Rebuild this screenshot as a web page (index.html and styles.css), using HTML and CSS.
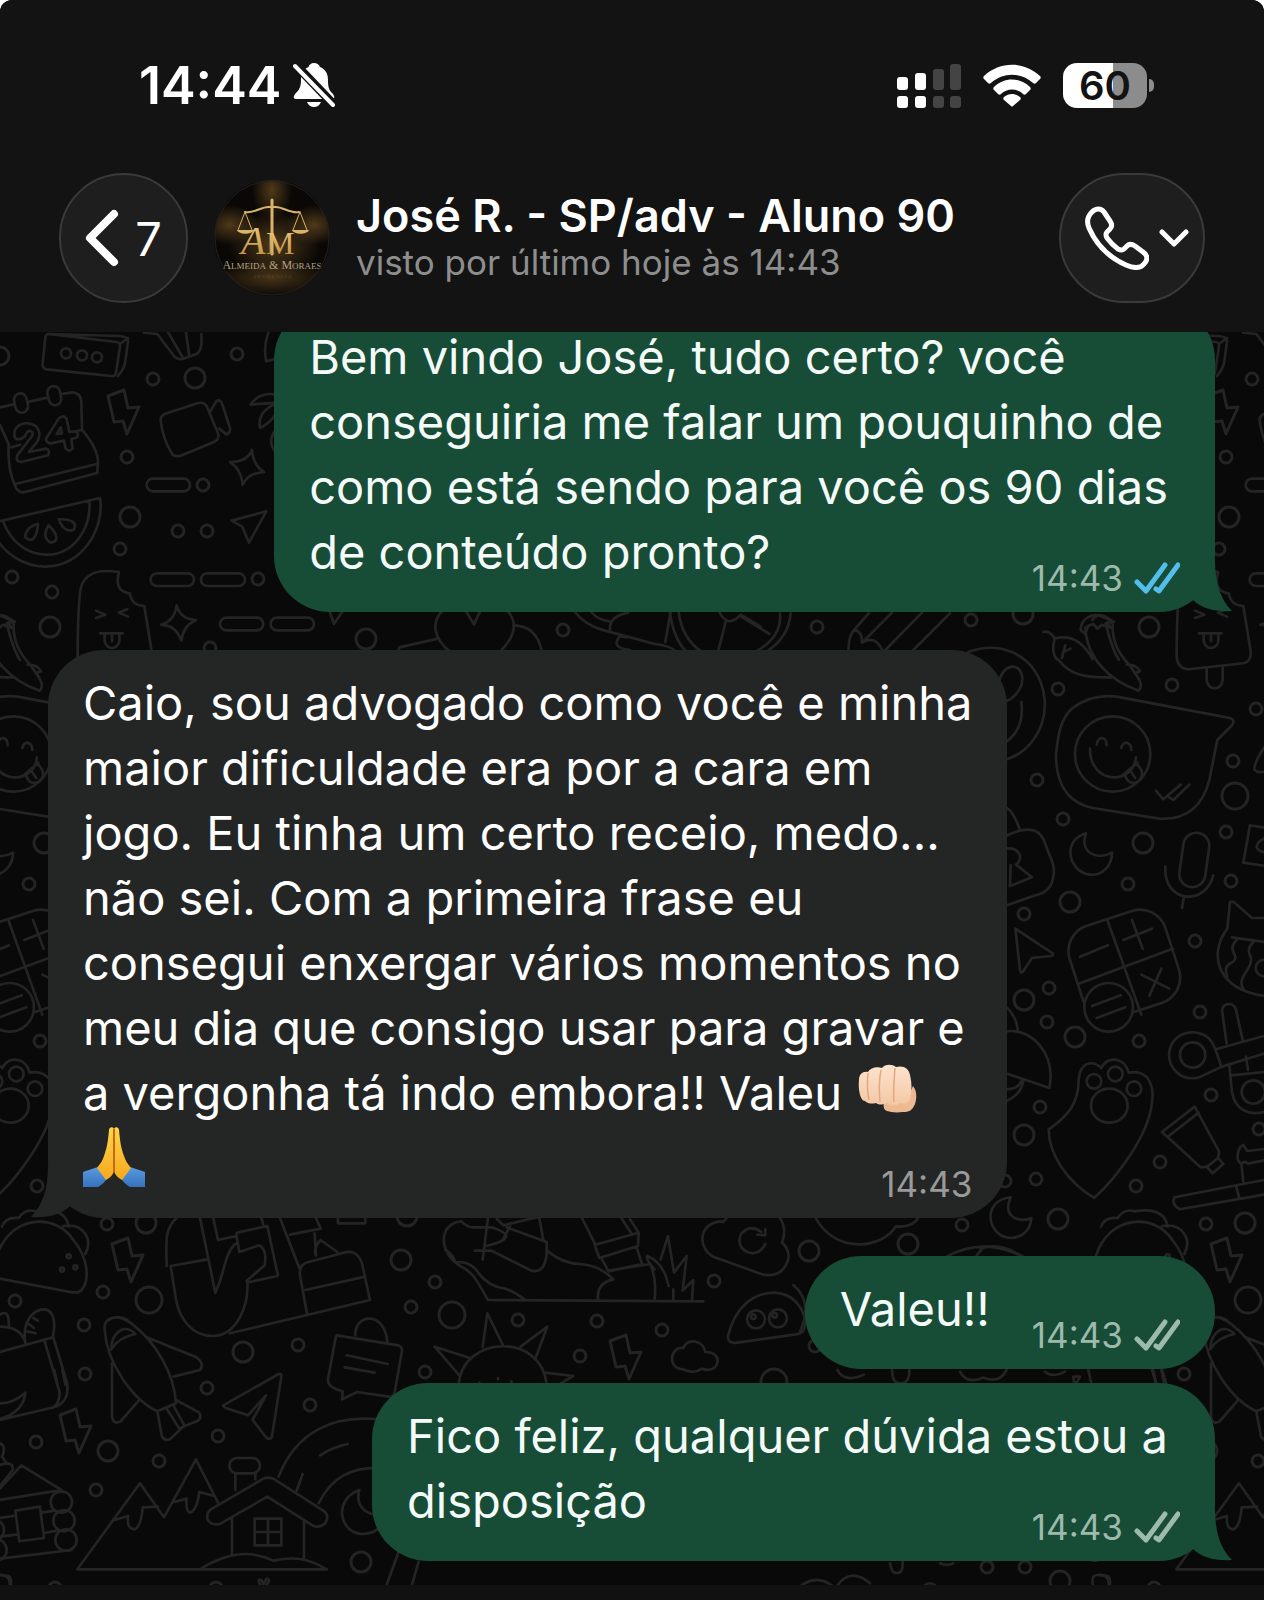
FILE: index.html
```html
<!DOCTYPE html>
<html lang="pt-BR">
<head>
    <meta charset="UTF-8">
    <meta name="viewport" content="width=device-width, initial-scale=1.0">
    <title>José R. - SP/adv - Aluno 90</title>
    <link rel="stylesheet" href="styles.css">
</head>
<body>
    <div class="phone">
        <header class="header">
            <div class="status-bar">
                <div class="clock">
                    <span>14:44</span>
                    <svg class="bell" width="42" height="46" viewBox="0 0 42 46" aria-hidden="true">
                        <path fill="#fff" d="M21 1c-3 0-5 2-5.500 4C10 7 8 12 8 18c0 7-2 10-5 13-3 3-3 6 0 6h36c3 0 3-3 0-6-3-3-4-6-4-13 0-7-3-11-8-13-.5-2-3-4-6-4zM14 40h14c-1 3-4 5-7 5s-6-2-7-5z"/>
                        <path stroke="#131313" stroke-width="9" d="M1 1l42 44"/>
                        <path stroke="#fff" stroke-width="4" stroke-linecap="round" d="M2 4l38 39"/>
                    </svg>
                </div>
                <div class="indicators">
                    <svg width="64" height="45" viewBox="0 0 64 45" aria-hidden="true">
                        <g fill="#fff">
                            <rect x="0" y="14" width="11" height="13" rx="3"/>
                            <rect x="18" y="10" width="11" height="17" rx="3"/>
                            <rect x="0" y="33" width="11" height="12" rx="3"/>
                            <rect x="18" y="33" width="11" height="12" rx="3"/>
                        </g>
                        <g fill="#444">
                            <rect x="36" y="6" width="11" height="21" rx="3"/>
                            <rect x="53" y="1" width="11" height="26" rx="3"/>
                            <rect x="36" y="33" width="11" height="12" rx="3"/>
                            <rect x="53" y="33" width="11" height="12" rx="3"/>
                        </g>
                    </svg>
                    <svg width="58" height="43" viewBox="0 0 58 43" fill="#fff" aria-hidden="true">
                        <path d="M1 12C17-3 41-3 57 12c1 1 1 2 0 3l-4 4c-1 1-2 1-3 0C38 8 20 8 8 19c-1 1-2 1-3 0l-4-4c-1-1-1-2 0-3z"/>
                        <path d="M11 23c10-10 26-10 36 0 1 1 1 2 0 3l-4 4c-1 1-2 1-3 0-6-6-16-6-22 0-1 1-2 1-3 0l-4-4c-1-1-1-2 0-3z"/>
                        <path d="M21 33c5-4 11-4 16 0 1 1 1 2 0 3l-7 6c-1 1-1 1-2 0l-7-6c-1-1-1-2 0-3z"/>
                    </svg>
                    <div class="battery"><span class="battery-level">60</span></div>
                </div>
            </div>

            <div class="nav">
                <button class="glass back" type="button" aria-label="Voltar, 7 conversas">
                    <svg width="34" height="58" viewBox="0 0 34 58" fill="none" aria-hidden="true">
                        <path stroke="#fff" stroke-width="8" stroke-linecap="round" stroke-linejoin="round" d="M29 5L5 29l24 24"/>
                    </svg>
                    <span>7</span>
                </button>
                <svg class="avatar" viewBox="0 0 117 117" role="img" aria-label="Almeida &amp; Moraes">
                    <defs>
                        <radialGradient id="glow">
                            <stop offset="0" stop-color="#6d4f22"/>
                            <stop offset="1" stop-color="#6d4f22" stop-opacity="0"/>
                        </radialGradient>
                        <linearGradient id="gold" x2="0" y2="1">
                            <stop offset="0" stop-color="#f0cf86"/>
                            <stop offset="1" stop-color="#bd8838"/>
                        </linearGradient>
                        <clipPath id="disc"><circle cx="58" cy="58" r="58"/></clipPath>
                    </defs>
                    <g clip-path="url(#disc)">
                        <rect width="117" height="117" fill="#0a0806"/>
                        <ellipse cx="58" cy="10" rx="20" ry="30" fill="url(#glow)" opacity=".7"/>
                        <ellipse cx="16" cy="45" rx="28" ry="20" fill="url(#glow)" opacity=".7"/>
                        <ellipse cx="100" cy="45" rx="28" ry="20" fill="url(#glow)" opacity=".7"/>
                        <ellipse cx="60" cy="65" rx="46" ry="34" fill="url(#glow)" opacity=".7"/>
                        <ellipse cx="58" cy="98" rx="60" ry="18" fill="url(#glow)" opacity=".6"/>
                        <g fill="none" stroke="#d9b36a" stroke-linecap="round">
                            <path stroke-width="3" d="M58 20v54"/>
                            <path stroke-width="2" d="M31 32c8 2 16-5 23-5h8c7 0 15 7 23 5"/>
                            <path stroke-width="1" d="M31 32l-7 18M31 32l7 18M86 32l-7 18M86 32l7 18"/>
                        </g>
                        <path fill="#d9b36a" d="M23 50h17c-2 5-15 5-17 0zM78 50h17c-2 5-15 5-17 0z"/>
                        <g fill="url(#gold)" font-family="Liberation Serif, serif">
                            <text x="27" y="74" font-size="40" font-style="italic">A</text>
                            <text x="52" y="74" font-size="32">M</text>
                        </g>
                        <text x="58" y="89" font-size="12" text-anchor="middle" fill="#b5a083" font-family="Liberation Serif, serif">A<tspan font-size="9">LMEIDA</tspan> &amp; M<tspan font-size="9">ORAES</tspan></text>
                        <text x="58" y="98" font-size="5" text-anchor="middle" fill="#5f4c31" font-family="Liberation Serif, serif">A D V O C A C I A</text>
                    </g>
                    <circle cx="58" cy="58" r="57" fill="none" stroke="#222"/>
                </svg>
                <div class="contact">
                    <h1 class="contact-name">José R. - SP/adv - Aluno 90</h1>
                    <p class="contact-seen">visto por último hoje às 14:43</p>
                </div>
                <button class="glass call" type="button" aria-label="Ligar">
                    <svg width="64" height="64" viewBox="0 0 64 64" fill="none" stroke="#fff" stroke-width="5" stroke-linejoin="round" aria-hidden="true">
                        <path d="M7 6c4-4 9-4 12 0l6 9c2 3 2 6 0 8l-3 3c-2 2-1 4 0 6 3 4 7 8 11 11 2 1 4 2 6 0l3-3c2-2 5-2 8 0l8 6c5 3 5 8 1 12-4 5-11 4-18 1C23 51 11 38 4 22 1 15 3 10 7 6z"/>
                    </svg>
                    <svg width="30" height="18" viewBox="0 0 30 18" fill="none" aria-hidden="true">
                        <path stroke="#fff" stroke-width="5" stroke-linecap="round" stroke-linejoin="round" d="M3 3l12 12L27 3"/>
                    </svg>
                </button>
            </div>
        </header>

        <main class="chat">
            <!-- Doodle wallpaper, repeats every 1099px -->
            <svg class="wallpaper" aria-hidden="true">
                <defs>
                    <path id="bolt" d="M1 6L17 0l4 18 11-1-12 27-4-13-9 1z"/>
                    <g id="doodles">
                        <!-- dots -->
                        <g stroke-width="3">
                            <circle cx="237" cy="354" r="6"/><circle cx="153" cy="379" r="6"/><circle cx="127" cy="457" r="6"/>
                            <circle cx="203" cy="485" r="6"/><circle cx="178" cy="531" r="6"/><circle cx="207" cy="531" r="6"/>
                            <circle cx="120" cy="549" r="6"/><circle cx="12" cy="577" r="6"/><circle cx="52" cy="592" r="6"/>
                            <circle cx="258" cy="579" r="6"/><circle cx="210" cy="648" r="6"/><circle cx="195" cy="378" r="10"/>
                            <circle cx="130" cy="517" r="10"/><circle cx="0" cy="356" r="9"/>
                            <circle cx="971" cy="620" r="6"/><circle cx="1058" cy="689" r="6"/><circle cx="1172" cy="685" r="6"/>
                            <circle cx="1256" cy="709" r="6"/><circle cx="1037" cy="780" r="6"/><circle cx="1233" cy="761" r="6"/>
                            <circle cx="1063" cy="819" r="6"/><circle cx="1226" cy="832" r="6"/><circle cx="1023" cy="614" r="10"/>
                            <circle cx="1149" cy="627" r="10"/><circle cx="1143" cy="843" r="10"/><circle cx="1235" cy="796" r="13"/>
                            <circle cx="1128" cy="884" r="6"/><circle cx="1024" cy="914" r="6"/><circle cx="1195" cy="941" r="6"/>
                            <circle cx="1231" cy="881" r="6"/><circle cx="1049" cy="988" r="6"/><circle cx="1047" cy="1022" r="6"/>
                            <circle cx="1200" cy="1012" r="6"/><circle cx="1139" cy="1041" r="6"/><circle cx="1211" cy="1095" r="6"/>
                            <circle cx="1040" cy="1107" r="6"/><circle cx="1005" cy="1181" r="6"/><circle cx="1036" cy="1179" r="6"/>
                            <circle cx="1160" cy="1162" r="6"/><circle cx="1136" cy="1186" r="6"/><circle cx="1259" cy="1129" r="6"/>
                            <circle cx="1070" cy="902" r="10"/><circle cx="1024" cy="1000" r="10"/><circle cx="1075" cy="1037" r="10"/>
                            <circle cx="1024" cy="1135" r="10"/><circle cx="1058" cy="1219" r="10"/>
                            <circle cx="107" cy="1224" r="6"/><circle cx="103" cy="1292" r="6"/><circle cx="15" cy="1301" r="6"/>
                            <circle cx="84" cy="1325" r="6"/><circle cx="85" cy="1374" r="6"/><circle cx="207" cy="1388" r="6"/>
                            <circle cx="298" cy="1345" r="6"/><circle cx="310" cy="1405" r="6"/><circle cx="218" cy="1436" r="6"/>
                            <circle cx="36" cy="1442" r="6"/><circle cx="159" cy="1461" r="6"/><circle cx="96" cy="1490" r="6"/>
                            <circle cx="411" cy="1307" r="6"/><circle cx="146" cy="1223" r="10"/><circle cx="243" cy="1352" r="10"/>
                            <circle cx="108" cy="1451" r="10"/><circle cx="401" cy="1260" r="10"/><circle cx="361" cy="1562" r="10"/>
                            <circle cx="407" cy="1216" r="10"/><circle cx="149" cy="1300" r="13"/>
                            <circle cx="435" cy="1282" r="6"/><circle cx="518" cy="1320" r="6"/><circle cx="597" cy="1321" r="6"/>
                            <circle cx="662" cy="1330" r="6"/><circle cx="714" cy="1281" r="6"/><circle cx="425" cy="1372" r="6"/>
                            <circle cx="580" cy="1356" r="6"/><circle cx="815" cy="1346" r="6"/><circle cx="809" cy="1251" r="10"/>
                            <circle cx="452" cy="1315" r="13"/><circle cx="774" cy="1382" r="13"/><circle cx="908" cy="1244" r="10"/>
                            <circle cx="962" cy="1225" r="6"/><circle cx="987" cy="1567" r="6"/><circle cx="1025" cy="1567" r="6"/>
                            <circle cx="1060" cy="1581" r="10"/><circle cx="366" cy="639" r="10"/><circle cx="563" cy="630" r="6"/>
                            <circle cx="817" cy="627" r="6"/><circle cx="55" cy="1588" r="6"/><circle cx="216" cy="1588" r="6"/>
                            <use href="#bolt" x="107" y="390"/><use href="#bolt" x="111" y="1238"/>
                            <use href="#bolt" x="59" y="1409"/><use href="#bolt" x="609" y="1335"/>
                        </g>
                        <!-- speaker, calendar, camera, melon, ice lolly -->
                        <g transform="translate(0 320) scale(.3333)">
                            <path d="M145 42L350 66q12 2 10 14l-12 78q-2 12-14 10L140 148q-14-2-12-16l8-80q2-10 12-10l210 6q28 2 26 16l-8 60q-2 20-22 44M360 72l24-18"/>
                            <circle cx="198" cy="100" r="15"/><circle cx="246" cy="106" r="15"/><circle cx="291" cy="112" r="15"/>
                            <path d="M0 262l40-9M88 245l54-12M186 222l30-5q26 0 28 28l2 84q48 58 48 96l-2 34-220 58q-22 2-28-24-22-44-18-120L0 315M34 382l26-8M220 336l26-6M46 492L290 432"/>
                            <rect x="44" y="220" width="38" height="58" rx="19" transform="rotate(-12 63 249)"/>
                            <rect x="144" y="198" width="38" height="58" rx="19" transform="rotate(-12 163 227)"/>
                            <path d="M44 350c-6-30 20-42 40-40 40 4 40 40 24 60l-22 26 52-10q14 4 6 20l-80 20q-20-2-12-20l44-58c8-14-10-22-18-6-6 16-30 22-34 8zM176 296l-38 60q0 12 14 14l40-8 4 22q10 14 22 2l-4-28 18-6q6-14-6-18l-18 2-8-40q-10-14-24 0zM170 342l12-20 4 18z"/>
                            <path d="M482 302q-2-12 12-20l98-32q20-6 28 8l34 82q6 18-12 26l-96 40q-24 8-32-8-26-44-32-96zM630 276l20-34q12-4 16 8l24 74q2 14-10 20l-22-18"/>
                            <path d="M752 254c16-28 50-36 76-30M752 254c30-4 50-2 76-6M828 250c-40 20-54 40-48 74 20-10 36-20 48-44M826 330c-14 20-18 40-4 60M432 38l40 4 50 66q12 14 28 8l40-14q18-10 14-60M505 38l44 76M558 38l10 70M805 38q-16 44-6 86l28-8"/>
                            <path d="M690 426c30 0 56-10 66-36 2 30 12 50 36 66-34 4-52 12-64 38-2-30-14-52-38-68zM484 914c26-8 42-26 46-58 8 30 26 42 58 44-26 12-40 30-44 62-10-28-24-44-60-48zM695 602l104-28-52 94-20-48z"/>
                            <rect x="440" y="476" width="130" height="38" rx="19"/><rect x="452" y="760" width="130" height="38" rx="19"/>
                            <rect x="603" y="760" width="132" height="38" rx="19"/><rect x="660" y="893" width="130" height="38" rx="19"/>
                            <rect x="812" y="893" width="130" height="38" rx="19"/>
                            <path d="M-10 606L300 534c14 90-50 204-164 206C70 740 10 700-20 640M10 606c24 60 70 98 130 98 80 0 134-76 128-160"/>
                            <path d="M114 612c-24 4-40 24-38 40 14 14 34 12 38-40zM146 616c-14 22-14 42 6 52 24-2 24-22-6-52zM176 598c10 26 26 38 44 32 14-20-4-34-44-32z"/>
                            <path d="M233 1010c0-80 0-130 8-200 10-50 50-64 116-54-10 40 0 60 32 64 6 28 20 38 44 38l22 136q2 32-22 36l-165 18q-32-2-35-38zM323 1045v36q4 24 24 24t24-24v-40M288 872l28 12-28 10M382 868l-26 10 28 12M300 940h68M314 942v22q6 20 22 20t22-20v-22M336 946v18"/>
                            <path d="M-20 900q20-30 60 4l-20 6q20 80 40 110"/>
                        </g>
                        <!-- strip between the first two messages -->
                        <g transform="translate(260 590) scale(.3333)">
                            <path d="M208 62l14 40 26-38M570 185c-50-40-58-90-20-125M720 185c50-50 54-90 20-125M616 60l26 44 18-40M416 180l2-8 116-26M760 106q70 0 86 80M945 66q30 40 90 56l150 40q50 6 64 24M994 66q20 24 54 28M1050 120q-4-40 54-52M1232 66l-16 90M1230 66q10 80 50 120M1256 66q10 80 70 120M1378 66q26 50 64 8l60 36M1398 92l-24 94M1110 180q-60-6-30-42l20 4"/>
                        </g>
                        <g transform="translate(740 320) scale(.3333)">
                            <path d="M4 890l84 52M120 880q6 70-68 112M152 880q-6 70-68 112M386 880l-42 48q-20 20-18 64M344 928q24 10 22 40 36-24 60 20M366 968l90-90M436 990l110-112M520 990l110-110"/>
                        </g>
                        <!-- peppers, message bubble, padlock, moon, microphone -->
                        <g transform="translate(960 540) scale(.3333)">
                            <path d="M250 276q20-6 34 20c-10 40 0 60 12 64 30 40 70 54 160 52M284 296q70-20 114 62M316 316l-6 20 22-10M310 336l-4 18M376 262c4 90 70 160 160 190 20-20-10-50-30-80-30-30-50-70-48-120M362 270c0-30 30-52 60-42l40 18-20 2 10 16-26-10-14 12-12-14-16 6-8 24zM500 374q30 0 40 20l-16 6"/>
                            <path d="M0 350c90-60 240-20 254 130 6 90-50 160-120 180M120 416c20-60 80-40 64 20q-16 40-54 50M184 486q10 80-46 120"/>
                            <path d="M470 470l330 62q30 4 16 24l-44 44-24 120c-20 80-70 120-150 116l-200-32c-80-16-110-80-110-160 6-60 14-110 50-140 40-30 80-40 132-34z"/>
                            <circle cx="458" cy="642" r="113"/>
                            <path d="M390 626c0 110 130 110 138 26M410 614q4-20 16-20 14 2 14 22M484 624q4-16 16-16 14 4 14 22M490 704l42-36M494 704q10 30 34 24 24-12 16-38l-14-20M512 694l14 20M588 752l22 26 52-44M628 772l12 8 48-46"/>
                            <path d="M140 804q20 10 40 66M138 888q100-50 120 30c10 30 30 60 22 90q-4 50-60 60l-80 28M378 880c-20 56 30 84 78 58 0 40-30 70-66 66-60-6-90-100-12-124z"/>
                            <rect x="664" y="878" width="78" height="164" rx="39" transform="rotate(8 703 960)"/>
                            <path d="M616 980c-6 110 120 120 144 26M672 1070l-6 34M870 856l60 10M870 856l-20 112 80 12M930 890q-40 10-40 32 10 20 40 12M940 590c-30 30-60 80-56 100 20 16 40 2 56-12"/>
                        </g>
                        <!-- key, calculator, cat, paw, paint tube -->
                        <g transform="translate(980 840) scale(.3333)">
                            <path d="M78 26q30-6 42 20 2 18-12 28l48 38-66 26 2-62M106 266l112 74q4 6-6 8l-56 6-28 42q-6 6-8-6z"/>
                            <rect x="282" y="228" width="302" height="290" rx="80" transform="rotate(-18 433 373)"/>
                            <path d="M382 240l102 284M294 432l284-106M300 350l84-34M430 300l86-34M456 240l32 86M484 404l84 42M544 386l-36 82"/>
                            <circle cx="386" cy="502" r="73" fill="#090909"/>
                            <path d="M336 498l86-32M350 534l86-32"/>
                            <path d="M750 186q8-4 16 4l50 44h60M750 186l-8 80c-60 80-30 190 130 204M756 292l100 14M770 300q-20 20-8 40t-10 30-10 40M820 306q-20 20-10 40t-12 50-8 50"/><circle cx="852" cy="384" r="25"/>
                            <path d="M78 500q32 30 36 74M78 574c80-10 150 70 130 170L78 700M78 748q40 0 48-30M78 784q46-20 52-62"/>
                            <path d="M206 868c60-40 90-80 90-150 4-50 40-60 68-34 20-40 70-30 82 14 60-10 78 40 70 90-10 100-110 230-174 286-80-50-136-130-136-206z"/>
                            <circle cx="342" cy="724" r="22"/><circle cx="406" cy="702" r="22"/><circle cx="462" cy="746" r="22"/><ellipse cx="388" cy="797" rx="55" ry="51"/>
                            <path d="M726 680l-64 30c-60 20-100-30-94-76 14-70 100-70 126-30q10 14 30 76zM708 628l144-40M726 680l130-40M740 610l-14-100q4-18 20-18 18 0 22 18l20 90M748 676l8 80c10 60 60 70 96 60M754 706l98-10M798 650l6 40"/><circle cx="638" cy="645" r="38"/><circle cx="820" cy="756" r="35"/>
                            <path d="M546 876l98-76 74 136-4 18-32 26-20 2zM564 890l92-72M714 954l16 18-32 28-18-20M790 1025l-6-54c-20-10-10-50 6-56l12 18 50-6M784 971q10-10 20 0l48-10M852 1020l-268 52q-12 20 16 36l252-44M768 1038l10 36"/>
                            <path d="M92 1072c-90 10-70 120 0 122 30 0 60-20 62-60-30 16-90 0-62-62zM0 1225q70-20 130 30"/>
                        </g>
                        <!-- taco, groceries, rocket, paper plane, mountains, cabin -->
                        <g transform="translate(0 1190) scale(.3333)">
                            <path d="M-10 200c40-130 180-130 230-50 50 60 44 120 30 142-8 18-20 16-40 14L-10 264M6 110q10-30 50-26 20-30 50-20 90-14 100 46M190 108c60-10 90 40 66 84"/>
                            <circle cx="206" cy="199" r="6"/><circle cx="186" cy="239" r="6"/><circle cx="226" cy="232" r="6"/>
                            <path d="M600 84l46 224c20-40 20-60 30-90q14-50 36-60M640 84l14 66 56-12M500 228c0-60-10-110 30-144M512 228l110-20M512 228l16 100c10 60 50 110 108 110 80 0 110-100 106-160l90-20q4-4 0-10l-30-140-90 20q-4 4-2 12l8 46 60-20c20 10 20 40 16 60l-54 46M690 430l420-100-24-110q-16-46-60-30l-100 26q-30 6-26 40l22 120M916 300l180-40M840 84l58 150M870 134l92-18-16-36M944 130l4 66q-10-20 14-46l50 36M784 84l6 20M1014 84v16h82V84"/>
                            <path d="M0 486l160-44 42 140c4 40-10 60-40 70L0 690M134 454l44 150q4 36-22 50M76 460c-10-60 20-104 60-102 30 6 30 50 22 86M100 384l14 8M86 402l16 12M80 424l26 6M0 410q60 0 76 46M0 374q30-20 26 40M0 640q40 0 76-32-6 60-76 78"/>
                            <path d="M314 420c-6-40 40-50 80-20 80 60 130 160 134 240l-56 24C400 630 320 520 314 420zM334 478c0-50 40-80 72-46-30 6-56 20-72 46zM322 392q30-20 60-2M436 440l150 60q30 20 14 40l-80 20M336 520v160q4 26 26 14l54-62M472 664l14 76q12 16 26 6l42-40M528 630l70 38q8 16-4 24l-40 16M500 656l38 60 16-8-34-62"/>
                            <path d="M670 646l166-94q10-2 8 8l-28 180q-8 12-18 2l-40-52 40-74-54 60-66-22q-10-4-8-8z"/>
                            <path d="M1010 436l186 30q12 6 10 18l-22 124q-4 14-18 12l-94-14-46 22 2-24q-46-12-44-36l22-120q2-10 4-12zM1066 436c0-70 90-70 96 20M1040 496l124 26M1034 532l90 16"/>
                            <path d="M980 1138H232L420 880l72 102 96-174 66 130M344 990l40-12q-4 40 20 40 20-10 24-66l46-2M524 936l36-10q-4 40 12 42 20-10 26-62l44 12"/>
                            <path d="M630 960l160-94q14-6 30 0l150 96q20 14 6 38-14 14-36 8L802 920 660 1002q-30 6-38-16-2-16 8-26zM696 986v110M912 990v118M764 986h80v80h-80zM804 986v80M764 1026h80M706 900v-50M766 868v-20M600 1138c80-50 150-60 220-26 60-12 100-10 160 26"/>
                            <rect x="688" y="804" width="92" height="46" rx="23"/>
                            <path d="M836 860c50-130 160-190 310-170M960 796q40-26 84-34M908 852l-18 50M956 940c40-80 100-110 190-106M1078 900c-80 30-60 130 10 132 40 0 60-20 66-60-50 10-90-20-76-72zM1160 1185l40-110M1236 1185l20-70"/>
                            <path d="M-10 906l74-80 120 74-184 30M0 984l40-6M124 968l40-6M0 1040l50-6M130 1030l40-8M0 1106l216-26M46 962l74-12 12 94-74 10zM-20 830l40-10q20 0 18 20l-40 50M0 1154l26 4q10 8 6 28M0 760q20 10 6 40l16 22"/>
                            <circle cx="184" cy="936" r="32"/><circle cx="192" cy="992" r="32"/><circle cx="198" cy="1050" r="32"/><circle cx="-12" cy="1080" r="32"/><circle cx="-20" cy="1020" r="32"/>
                            <path d="M780 1184q-10-20 6-12l4 12 10-18q14 4 0 18"/>
                        </g>
                        <!-- sneakers, grass, sun, clouds -->
                        <g transform="translate(400 1200) scale(.3333)">
                            <path d="M910 304L264 300c-30-50-40-80-80-100-70-40-70-130 0-136q20 20 40 18h50q50 16 44 30-10 16-60 26M136 150q20 10 30 36c20 0 50 0 70 34q30 40 80 46 30 10 60 34M264 54l-16 124M224 152h50l120 60q40 10 46-50v-36l-120-44M418 54l12 66M330 80l-22 40M290 56l20 20 100-24M440 152q50 40 100 40 60 4 100 46-50 10-46 60"/>
                            <path d="M546 54l40 80 130-36-26-40M716 98l-2 40-116 36-14-40M606 178l20 36 100-22-16-50M626 212l124-20q20 40 14 106M742 168q50 20 64 90M742 168q-6 10 22 40M664 54l30 46M782 178l22-70 18 110 38-50-12 104 32-32-4 60M820 268v32"/>
                            <path d="M970 64c-80 0-80 90-20 110l140 50q60 10 76-50 0-30-20-46 16-40-6-74M970 66l10-12M1084 96q-36-26-62 8c-20 50 50 80 74 28M1096 88v18l-24-2"/>
                            <path d="M984 408c20-80 70-130 140-130 70 4 100 70 88 110q-4 14-30 16l-170 24q-30 4-28-20z"/><circle cx="1068" cy="358" r="27"/><circle cx="1134" cy="355" r="27"/><circle cx="1060" cy="350" r="7"/><circle cx="1124" cy="346" r="7"/>
                            <path d="M176 555c10-150 250-160 264 0M248 442l14-102 46 94M362 440l80-60-36 96M176 524l-72-84 106 34M434 518l86 10-40 24M238 548v4M294 534v4M334 544v4"/>
                            <path d="M850 508c-50 0-40-70 0-64 10-30 60-26 66 12 60 0 40 70-10 50-20 14-40 10-56 2z"/>
                        </g>
                        <!-- below the grey message and between the green ones -->
                        <g transform="translate(800 1040) scale(.3333)">
                            <path d="M48 535c60 110 200 90 240 24q50 6 70-30M440 650q110-60 230 0M530 646l20-24M-20 735q60 50 20 140M112 990q20 40 80 14M276 990q0 40 24 40 30 0 28-40M480 995q20 40 70 18 50 20 70-24M735 995q20 20 60 0M820 1010h20l-8 16h-10zM865 990l10 46M1060 990l10 46M1084 990l10 46M270 1570q4 30 20 30 20 0 18-34M0 1640q50-40 100 0M110 1640q40-60 100-10M370 1640q20-20 40 0M880 1640q-10-40 20-34 30 0 26 34M420 1570q20 10 40 0"/>
                        </g>
                    </g>
                </defs>
                <g transform="translate(0 -332)" fill="none" stroke="#242424" stroke-width="8" stroke-linecap="round" stroke-linejoin="round">
                    <use href="#doodles"/>
                    <use href="#doodles" x="1099"/>
                    <use href="#doodles" x="-1099"/>
                </g>
            </svg>

            <article class="message sent first">
                <p class="text">Bem vindo José, tudo certo? você<br>conseguiria me falar um pouquinho de<br>como está sendo para você os 90 dias<br>de conteúdo pronto?</p>
                <div class="meta read">
                    <time>14:43</time>
                    <svg class="ticks" viewBox="0 0 46 32" role="img" aria-label="Lida"><path d="M3 20l9 9L31 3M22 27l3 2L44 3"/></svg>
                </div>
                <svg class="tail" viewBox="0 0 52 52" aria-hidden="true"><path d="M35 0c0 24 6 40 17 51-16 1-30-2-39-11L0 30z"/></svg>
            </article>

            <article class="message received">
                <p class="text">Caio, sou advogado como você e minha<br>maior dificuldade era por a cara em<br>jogo. Eu tinha um certo receio, medo...<br>não sei. Com a primeira frase eu<br>consegui enxergar vários momentos no<br>meu dia que consigo usar para gravar e<br>a vergonha tá indo embora!! Valeu
                    <svg class="emoji" viewBox="0 0 62 62" role="img" aria-label="Soco">
                        <defs>
                            <linearGradient id="skin" x2="0" y2="1">
                                <stop offset="0" stop-color="#fde3cc"/>
                                <stop offset="1" stop-color="#f3c8a6"/>
                            </linearGradient>
                        </defs>
                        <path fill="#ecb993" d="M29 42l24-6 5-11c4 5 4 12 2 18-3 7-6 8-12 8-8 1-12 0-16-1-3-1-4-4-3-8z"/>
                        <path fill="url(#skin)" d="M4 19c0-6 4-9 9-8 2-4 9-6 14-4 3-4 10-4 14-1 7-2 13 1 14 8 2 8 2 16 0 24-1 4-5 6-10 4-3 3-9 3-13 0-4 2-8 2-11 0-4 1-8 1-11-2-5 0-7-13-6-21z"/>
                        <path fill="none" stroke="#dfa982" stroke-width="1.500" d="M13 12c-1 10-1 18 1 27M26 9c-2 10-2 22-1 32M40 7c-1 12-2 25-1 34"/>
                    </svg><br><svg class="emoji" viewBox="0 0 62 62" role="img" aria-label="Mãos juntas">
                        <defs>
                            <linearGradient id="hand" x2="0" y2="1">
                                <stop offset="0" stop-color="#ffd54a"/>
                                <stop offset="1" stop-color="#f7a81e"/>
                            </linearGradient>
                            <linearGradient id="sleeve" x2="0" y2="1">
                                <stop offset="0" stop-color="#5a9be0"/>
                                <stop offset="1" stop-color="#3672bd"/>
                            </linearGradient>
                        </defs>
                        <path fill="url(#sleeve)" d="M0 46c6-2 11-4 15-5l10 9c-2 5-5 8-10 11H0zM62 46c-6-2-11-4-15-5l-10 9c2 5 5 8 10 11h15z"/>
                        <path fill="url(#hand)" d="M31 3c-1-3-5-2-5 1-1 11-2 18-5 26-2 6-4 8-7 12l9 12c4-2 7-5 8-9 1 4 4 7 8 9l9-12c-3-4-5-6-7-12-3-8-4-15-5-26 0-3-4-4-5-1z"/>
                        <path fill="none" stroke="#c46a12" stroke-width="2" d="M31 3v43"/>
                    </svg></p>
                <div class="meta"><time>14:43</time></div>
                <svg class="tail" viewBox="0 0 52 52" aria-hidden="true"><path d="M35 0c0 24 6 40 17 51-16 1-30-2-39-11L0 30z"/></svg>
            </article>

            <article class="message sent short">
                <p class="text">Valeu!!</p>
                <div class="meta">
                    <time>14:43</time>
                    <svg class="ticks" viewBox="0 0 46 32" role="img" aria-label="Entregue"><path d="M3 20l9 9L31 3M22 27l3 2L44 3"/></svg>
                </div>
            </article>

            <article class="message sent">
                <p class="text">Fico feliz, qualquer dúvida estou a<br>disposição</p>
                <div class="meta">
                    <time>14:43</time>
                    <svg class="ticks" viewBox="0 0 46 32" role="img" aria-label="Entregue"><path d="M3 20l9 9L31 3M22 27l3 2L44 3"/></svg>
                </div>
                <svg class="tail" viewBox="0 0 52 52" aria-hidden="true"><path d="M35 0c0 24 6 40 17 51-16 1-30-2-39-11L0 30z"/></svg>
            </article>
        </main>
        <footer class="bottom-edge"></footer>
    </div>
</body>
</html>
```
FILE: styles.css
```css
/* Base */
* {
    box-sizing: border-box;
}

body {
    margin: 0;
    background: #fff;
    color: #fff;
    font-family: "Inter", "Liberation Sans", sans-serif;
}

h1, p {
    margin: 0;
}

button {
    font: inherit;
    color: inherit;
    cursor: pointer;
}

.phone {
    min-height: 100vh;
    display: flex;
    flex-direction: column;
    background: #111;
    border-radius: 12px 12px 0 0;
    overflow: hidden;
}

/* Status bar */
.header {
    background: #131313;
}

.status-bar {
    display: flex;
    justify-content: space-between;
    align-items: center;
    padding: 62px 109px 0 139px;
}

.clock {
    display: flex;
    align-items: center;
    gap: 12px;
    font-size: 52px;
    line-height: 45px;
    font-weight: 600;
}

.indicators {
    display: flex;
    align-items: center;
    gap: 22px;
}

.battery {
    position: relative;
    width: 84px;
    height: 45px;
    margin-right: 8px;
    border-radius: 14px;
    background: linear-gradient(to right, #fff 60%, #8c8c8c 60%);
    color: #131313;
    font-size: 40px;
    line-height: 45px;
    font-weight: 600;
    text-align: center;
}

.battery::after {
    content: "";
    position: absolute;
    left: 86px;
    top: 16px;
    width: 5px;
    height: 13px;
    border-radius: 0 6px 6px 0;
    background: #8c8c8c;
}

/* Navigation */
.nav {
    display: flex;
    align-items: center;
    padding: 65px 59px 29px;
}

.glass {
    display: flex;
    align-items: center;
    justify-content: center;
    gap: 10px;
    height: 130px;
    padding: 0;
    border: 2px solid #3a3a3a;
    border-radius: 65px;
    background: #1e1e1e;
}

.back {
    width: 129px;
    gap: 16px;
    font-size: 47px;
}

.call {
    width: 146px;
    margin-left: auto;
    padding-left: 10px;
}

.avatar {
    width: 117px;
    height: 117px;
    margin: 0 25px 0 26px;
}

.contact-name {
    font-size: 45px;
    line-height: 48px;
    font-weight: 600;
}

.contact-seen {
    color: #8e8e8e;
    font-size: 35px;
    line-height: 44px;
}

/* Chat */
.chat {
    position: relative;
    flex: 1;
    display: flex;
    flex-direction: column;
    align-items: flex-end;
    padding: 0 49px 24px 48px;
    background: #090909;
    overflow: hidden;
}

.wallpaper {
    position: absolute;
    inset: 0;
    width: 100%;
    height: 100%;
}

.message {
    position: relative;
    display: flex;
    flex-direction: column;
    margin-top: 14px;
    padding: 20px 35px 16px;
    border-radius: 56px;
    font-size: 47px;
    line-height: 65px;
}

.sent {
    background: #174c37;
    color: #f4faf7;
}

.sent .text {
    padding-right: 12px;
}

.received {
    align-self: flex-start;
    margin-top: 38px;
    background: #242625;
}

.received + .sent {
    margin-top: 38px;
}

/* Scrolled partly under the header */
.first {
    margin-top: -28px;
}

.short {
    flex-direction: row;
    gap: 30px;
}

.short .text {
    margin-bottom: 12px;
}

.emoji {
    display: inline-block;
    width: 62px;
    height: 62px;
    vertical-align: -13px;
}

.meta {
    display: flex;
    align-items: center;
    align-self: flex-end;
    gap: 11px;
    margin-top: -24px;
    color: #9dbaab;
    font-size: 35px;
    line-height: 36px;
}

.received .meta {
    color: #9a9a9a;
}

.ticks {
    width: 46px;
    height: 32px;
    fill: none;
    stroke: #9dbaab;
    stroke-width: 5;
    stroke-linecap: round;
    stroke-linejoin: round;
}

.read .ticks {
    stroke: #53bdeb;
}

.tail {
    position: absolute;
    right: -17px;
    bottom: 0;
    width: 52px;
    height: 52px;
    fill: #174c37;
}

.received .tail {
    right: auto;
    left: -17px;
    transform: scaleX(-1);
    fill: #242625;
}

.bottom-edge {
    height: 15px;
}
```
